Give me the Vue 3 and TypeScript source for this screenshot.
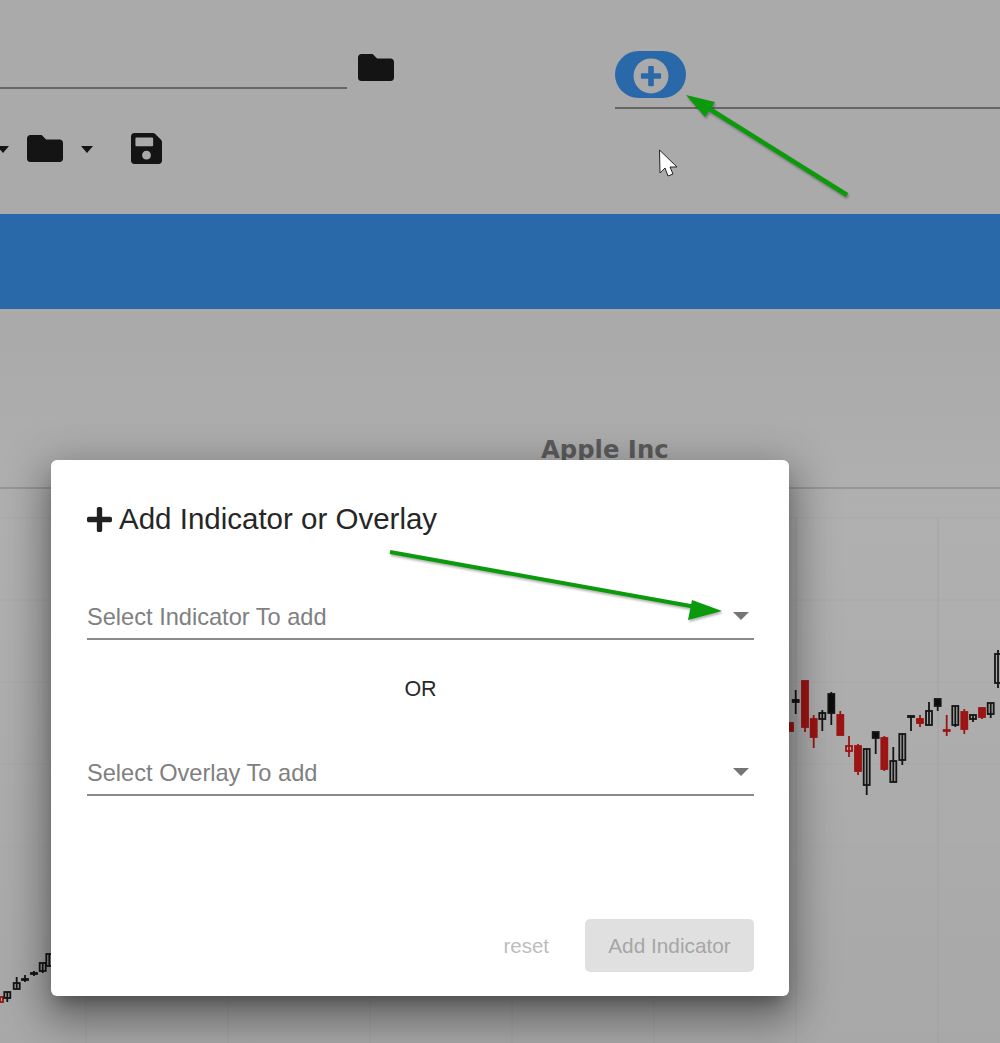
<template>
  <div class="page">
    <header class="toolbar">
      <div class="row-top">
        <div class="field"></div>
        <svg class="folder folder-top" viewBox="0 64 512 384"><path :d="folderPath" /></svg>
        <div class="add-field">
          <button class="add-btn">
            <svg viewBox="0 0 512 512"><path :d="plusCirclePath" /></svg>
          </button>
        </div>
      </div>
      <div class="row-tools">
        <span class="caret caret-cut"></span>
        <svg class="folder" viewBox="0 64 512 384"><path :d="folderPath" /></svg>
        <span class="caret"></span>
        <svg class="save" viewBox="0 32 448 448"><path :d="savePath" /></svg>
      </div>
    </header>

    <div class="band"></div>

    <section class="chart">
      <svg class="chart-svg" viewBox="0 309 1000 734">
        <defs>
          <linearGradient id="chartFade" x1="0" y1="0" x2="0" y2="1">
            <stop offset="0" stop-color="#aaaaaa" />
            <stop offset="0.25" stop-color="#b0b0b0" />
            <stop offset="1" stop-color="#a8a8a8" />
          </linearGradient>
        </defs>
        <rect x="0" y="345" width="1000" height="698" fill="url(#chartFade)" />
        <text x="541" y="458" class="chart-title">Apple Inc</text>
        <line x1="0" y1="488" x2="1000" y2="488" stroke="#8f8f8f" stroke-width="1.5" />
        <line v-for="x in gridX" :key="'v' + x" :x1="x" :x2="x" y1="518" y2="1043" stroke="#a2a2a2" />
        <line v-for="y in gridY" :key="'h' + y" x1="0" x2="1000" :y1="y" :y2="y" stroke="#a8a8a8" />
        <g v-for="c in candles" :key="c.x">
          <line :x1="c.x" :x2="c.x" :y1="c.wt" :y2="c.wb" :stroke="stroke(c.t)" stroke-width="1.8" />
          <rect
            :x="c.x - 3"
            :y="c.bt"
            width="6"
            :height="c.bb - c.bt"
            :fill="fill(c.t)"
            :stroke="stroke(c.t)"
            stroke-width="1.8"
          />
        </g>
      </svg>
    </section>

    <div class="modal">
      <h2 class="modal-title">
        <svg viewBox="0 32 448 448"><path :d="plusPath" /></svg>
        <span>Add Indicator or Overlay</span>
      </h2>
      <div class="select">
        <span>Select Indicator To add</span>
        <i class="select-caret"></i>
      </div>
      <div class="or">OR</div>
      <div class="select">
        <span>Select Overlay To add</span>
        <i class="select-caret"></i>
      </div>
      <div class="modal-actions">
        <button class="reset">reset</button>
        <button class="submit">Add Indicator</button>
      </div>
    </div>

    <svg class="notes" viewBox="0 0 1000 1043">
      <g class="arrow">
        <line x1="847" y1="195" x2="708" y2="108" stroke="#0b9a0b" stroke-width="4.5" />
        <polygon points="686,95 715,102 705,117" fill="#0b9a0b" />
        <line x1="390" y1="552" x2="696" y2="607" stroke="#0b9a0b" stroke-width="4" />
        <polygon points="722,611 692,600 688,620" fill="#0b9a0b" />
      </g>
      <polygon
        points="659.5,150 677,167 670,167 673,174 668,176 665,168 660,173"
        fill="#fff"
        stroke="#222"
        stroke-width="1"
      />
    </svg>
  </div>
</template>

<script setup lang="ts">
type Kind = 'red' | 'black' | 'hollow' | 'pink'
interface Candle { x: number; wt: number; wb: number; bt: number; bb: number; t: Kind }

const folderPath = 'M464 128H272l-64-64H48C21.49 64 0 85.49 0 112v288c0 26.51 21.49 48 48 48h416c26.51 0 48-21.49 48-48V176c0-26.51-21.49-48-48-48z'
const savePath = 'M433.941 129.941l-83.882-83.882A48 48 0 0 0 316.118 32H48C21.49 32 0 53.49 0 80v352c0 26.51 21.49 48 48 48h352c26.51 0 48-21.49 48-48V163.882a48 48 0 0 0-14.059-33.941zM224 416c-35.346 0-64-28.654-64-64 0-35.346 28.654-64 64-64s64 28.654 64 64c0 35.346-28.654 64-64 64zm96-304.52V212c0 6.627-5.373 12-12 12H76c-6.627 0-12-5.373-12-12V108c0-6.627 5.373-12 12-12h228.52c3.183 0 6.235 1.264 8.485 3.515l3.48 3.48A11.996 11.996 0 0 1 320 111.48z'
const plusCirclePath = 'M256 8C119 8 8 119 8 256s111 248 248 248 248-111 248-248S393 8 256 8zm144 276c0 6.6-5.4 12-12 12h-92v92c0 6.6-5.4 12-12 12h-56c-6.6 0-12-5.4-12-12v-92h-92c-6.6 0-12-5.4-12-12v-56c0-6.6 5.4-12 12-12h92v-92c0-6.6 5.4-12 12-12h56c6.6 0 12 5.4 12 12v92h92c6.6 0 12 5.4 12 12v56z'
const plusPath = 'M416 208H272V64c0-17.67-14.33-32-32-32h-32c-17.67 0-32 14.33-32 32v144H32c-17.67 0-32 14.33-32 32v32c0 17.67 14.33 32 32 32h144v144c0 17.67 14.33 32 32 32h32c17.67 0 32-14.33 32-32V304h144c17.67 0 32-14.33 32-32v-32c0-17.67-14.33-32-32-32z'

const gridX = [86, 228, 370, 512, 654, 796, 938]
const gridY = [518, 600, 682, 764, 846, 946]

const c = (x: number, wt: number, wb: number, bt: number, bb: number, t: Kind): Candle => ({ x, wt, wb, bt, bb, t })

const candles: Candle[] = [
  // bottom left run
  c(0, 997, 1002, 997, 1002, 'pink'),
  c(7.3, 992, 1002, 992, 998, 'hollow'),
  c(16.7, 977, 989, 983, 989, 'hollow'),
  c(25, 975, 982, 979, 980, 'black'),
  c(34, 971, 976, 973, 974, 'black'),
  c(42.7, 963, 973, 963, 971, 'hollow'),
  c(49.3, 954, 966, 954, 966, 'hollow'),
  // right of the dialog
  c(790, 723, 731, 723, 731, 'red'),
  c(795.7, 690, 714, 700, 702, 'black'),
  c(805, 681, 732, 681, 727, 'red'),
  c(813.7, 715, 748, 719, 737, 'red'),
  c(822.3, 710, 731, 713, 719, 'hollow'),
  c(831.3, 692, 725, 694, 713, 'black'),
  c(840.3, 711, 735, 715, 735, 'red'),
  c(849, 736, 757, 746, 751, 'pink'),
  c(858, 744, 775, 746, 771, 'red'),
  c(866.7, 749, 795, 749, 785, 'hollow'),
  c(875.7, 732, 754, 732, 738, 'black'),
  c(884.3, 736, 771, 738, 769, 'red'),
  c(893.3, 747, 782, 761, 782, 'hollow'),
  c(902.3, 734, 765, 734, 760, 'hollow'),
  c(911, 716, 731, 716, 717, 'black'),
  c(920, 715, 727, 719, 723, 'red'),
  c(929, 702, 725, 711, 725, 'hollow'),
  c(937.7, 699, 711, 699, 706, 'black'),
  c(946.7, 715, 736, 730, 731, 'red'),
  c(955.3, 706, 727, 706, 725, 'hollow'),
  c(964.3, 709, 734, 712, 729, 'red'),
  c(973, 715, 722, 715, 719, 'hollow'),
  c(982, 708, 719, 708, 717, 'red'),
  c(990.7, 703, 718, 703, 714, 'hollow'),
  c(998, 650, 688, 654, 683, 'hollow'),
]

function stroke(t: Kind) {
  if (t === 'red' || t === 'pink') return '#9c1414'
  return '#141414'
}
function fill(t: Kind) {
  if (t === 'red') return '#9c1414'
  if (t === 'black') return '#0c0c0c'
  return 'none'
}
</script>

<style>
html, body { margin: 0; padding: 0; }
</style>

<style scoped>
.page { position: relative; width: 1000px; height: 1043px; overflow: hidden; background: #aaaaaa; font-family: "Liberation Sans", Arial, sans-serif; }
.toolbar { height: 214px; }
.row-top { display: flex; align-items: flex-start; height: 108px; }
.field { width: 347px; height: 87px; border-bottom: 2px solid #666; flex: none; }
.folder { width: 36px; height: 27px; fill: #141414; flex: none; }
.folder-top { margin: 54px 0 0 11px; }
.add-field { flex: 1; margin-left: 221px; height: 107px; border-bottom: 2px solid #666; }
.add-btn { display: flex; align-items: center; justify-content: center; width: 71px; height: 47px; margin-top: 51px; padding: 2px 0 0; border: none; border-radius: 24px; background: #2a69a9; }
.add-btn svg { width: 36px; height: 36px; fill: #aaaaaa; }
.row-tools { display: flex; align-items: center; height: 32px; margin-top: 24px; }
.caret { flex: none; width: 0; height: 0; border-left: 6.5px solid transparent; border-right: 6.5px solid transparent; border-top: 7px solid #141414; margin: 2px 0 0 18px; }
.caret-cut { margin: 2px 0 0 -3px; }
.row-tools .folder { margin-left: 18px; }
.save { width: 31px; height: 31px; margin-left: 38px; fill: #141414; flex: none; }
.band { height: 95px; background: #2a69a9; }
.chart { height: 734px; }
.chart-svg { display: block; width: 1000px; height: 734px; }
.chart-title { font-family: "DejaVu Sans", sans-serif; font-weight: 700; font-size: 24.3px; fill: #5c5c5c; }
.modal { position: absolute; left: 51px; top: 460px; width: 738px; height: 536px; box-sizing: border-box; padding: 36px 35px 24px 36px; display: flex; flex-direction: column; background: #fff; border-radius: 6px; box-shadow: 0 11px 15px -7px rgba(0,0,0,.3), 0 24px 38px 3px rgba(0,0,0,.24), 0 9px 46px 8px rgba(0,0,0,.22); }
.modal-title { display: flex; align-items: center; gap: 7px; height: 46px; margin: 0 0 35px; font-size: 29.5px; font-weight: 400; color: #262626; }
.modal-title svg { width: 25px; height: 25px; fill: #212121; flex: none; }
.select { display: flex; align-items: center; justify-content: space-between; height: 63px; box-sizing: border-box; padding: 20px 5px 0 0; border-bottom: 2px solid #8a8a8a; font-size: 23.6px; color: #808080; }
.select-caret { width: 0; height: 0; margin-top: -3px; border-left: 8px solid transparent; border-right: 8px solid transparent; border-top: 8px solid #757575; }
.or { display: flex; align-items: center; justify-content: center; height: 93px; box-sizing: border-box; padding-top: 5px; font-size: 21.5px; color: #2a2a2a; }
.modal-actions { display: flex; align-items: center; justify-content: flex-end; gap: 36px; margin-top: auto; }
.reset { padding: 0; border: none; background: none; font: inherit; font-size: 20.5px; color: #bdbdbd; }
.submit { width: 169px; height: 53px; padding: 0; border: none; border-radius: 5px; background: #e0e0e0; font: inherit; font-size: 20.8px; color: #a6a6a6; }
.notes { position: absolute; left: 0; top: 0; width: 1000px; height: 1043px; pointer-events: none; }
.arrow { filter: drop-shadow(1px 2px 1px rgba(0,0,0,.3)); }
</style>
